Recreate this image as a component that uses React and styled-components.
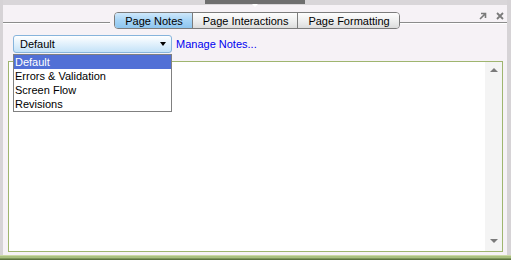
import React from 'react';
import styled, { createGlobalStyle } from 'styled-components';

const Global = createGlobalStyle`
  html, body { margin: 0; padding: 0; background: #f6f2f6; }
  body { font-family: "Liberation Sans", Arial, sans-serif; font-size: 11px; }
`;

const Window = styled.div`
  width: 511px;
  height: 260px;
  display: flex;
  flex-direction: column;
  overflow: hidden;
`;

const Panel = styled.div`
  flex: 1;
  display: flex;
  flex-direction: column;
  background: #f6f2f6;
  border-left: 3px solid #d6d3d6;
  border-right: 4px solid #d6d3d6;
  position: relative;
`;

const GripStrip = styled.div`
  height: 5px;
  background: #d9d6d9;
  display: flex;
  justify-content: center;
`;

const Grip = styled.div`
  width: 100px;
  height: 4px;
  background: #6f6f6f;
  display: flex;
  justify-content: center;
  align-items: flex-end;
  &::after {
    content: '';
    border-left: 3px solid transparent;
    border-right: 3px solid transparent;
    border-top: 3px solid #ffffff;
    margin-bottom: -3px;
  }
`;

const TabRow = styled.div`
  display: flex;
  height: 17px;
  margin-top: 7px;
`;

const Rule = styled.div`
  height: 1px;
  margin-top: 10px;
  background: #8c8c8c;
  border-bottom: 1px solid #ffffff;
`;

const LeftSide = styled.div`
  flex: 1;
`;

const RightSide = styled.div`
  flex: 1;
  display: flex;
  flex-direction: column;
`;

const Icons = styled.div`
  height: 9px;
  display: flex;
  justify-content: flex-end;
  gap: 9px;
  padding-right: 3px;
  margin-bottom: -9px;
`;

const Tabs = styled.div`
  display: flex;
  border: 1px solid #7c7c7c;
  border-radius: 4px;
  overflow: hidden;
  margin-left: 4px;
`;

const Tab = styled.div`
  padding: 0 9px 0 10px;
  line-height: 16px;
  color: #000;
  background: ${p => (p.active
    ? 'linear-gradient(#cfe8fb, #a6d4f6 50%, #8fc6ef)'
    : 'linear-gradient(#fdfdfd, #ececec 60%, #dcdcdc)')};
  & + & {
    border-left: 1px solid #7c7c7c;
  }
`;

const Toolbar = styled.div`
  display: flex;
  align-items: center;
  gap: 4px;
  margin: 6px 0 0 10px;
  height: 18px;
`;

const Select = styled.div`
  height: 16px;
  border: 1px solid #86b4dc;
  border-radius: 3px;
  background: linear-gradient(#ffffff, #e4f2fc 45%, #c4e2f8);
  display: flex;
  align-items: center;
  justify-content: space-between;
  padding: 0 5px 0 6px;
  box-sizing: content-box;
  width: 146px;
  &::after {
    content: '';
    border-left: 3px solid transparent;
    border-right: 3px solid transparent;
    border-top: 4px solid #000;
  }
`;

const Link = styled.a`
  color: #0000f0;
  text-decoration: none;
`;

const Menu = styled.div`
  position: absolute;
  top: 54px;
  left: 10px;
  width: 157px;
  background: #fff;
  border: 1px solid #808080;
  z-index: 2;
`;

const Option = styled.div`
  height: 14px;
  line-height: 14px;
  padding-left: 1px;
  color: ${p => (p.selected ? '#fff' : '#000')};
  background: ${p => (p.selected ? '#5170d6' : 'transparent')};
`;

const NotesBox = styled.div`
  flex: 1;
  margin: 8px 4px 3px 5px;
  border: 1px solid #9fb56f;
  background: #fff;
  display: flex;
  justify-content: flex-end;
`;

const Scrollbar = styled.div`
  width: 17px;
  background: #f4f4f4;
  display: flex;
  flex-direction: column;
  justify-content: space-between;
  align-items: center;
  padding: 6px 0 8px;
`;

const Arrow = styled.div`
  border-left: 4px solid transparent;
  border-right: 4px solid transparent;
  ${p => (p.up ? 'border-bottom: 4px solid #7a7a7a;' : 'border-top: 4px solid #7a7a7a;')}
`;

const Footer = styled.div`
  height: 5px;
  background: linear-gradient(#cbd9a4 0, #cbd9a4 1px, #a9bf80 1px, #a9bf80 3px, #7d9659 3px, #7d9659 4px, #5d7342 4px);
`;

export default function App() {
  const options = ['Default', 'Errors & Validation', 'Screen Flow', 'Revisions'];
  return (
    <Window>
      <Global />
      <Panel>
        <GripStrip><Grip /></GripStrip>
        <TabRow>
          <LeftSide><Rule /></LeftSide>
          <Tabs>
            <Tab active>Page Notes</Tab>
            <Tab>Page Interactions</Tab>
            <Tab>Page Formatting</Tab>
          </Tabs>
          <RightSide>
            <Icons>
              <svg width="8" height="8" viewBox="0 0 8 8">
                <path d="M1 7 L6 2 M2 1.5 H6.5 V6" stroke="#7a7a7a" strokeWidth="1.6" fill="none" />
              </svg>
              <svg width="8" height="8" viewBox="0 0 8 8">
                <path d="M1 1 L7 7 M7 1 L1 7" stroke="#7a7a7a" strokeWidth="1.8" fill="none" />
              </svg>
            </Icons>
            <Rule />
          </RightSide>
        </TabRow>
        <Toolbar>
          <Select>Default</Select>
          <Link href="#">Manage Notes...</Link>
        </Toolbar>
        <Menu>
          {options.map((o, i) => (
            <Option key={o} selected={i === 0}>{o}</Option>
          ))}
        </Menu>
        <NotesBox>
          <Scrollbar>
            <Arrow up />
            <Arrow />
          </Scrollbar>
        </NotesBox>
      </Panel>
      <Footer />
    </Window>
  );
}
